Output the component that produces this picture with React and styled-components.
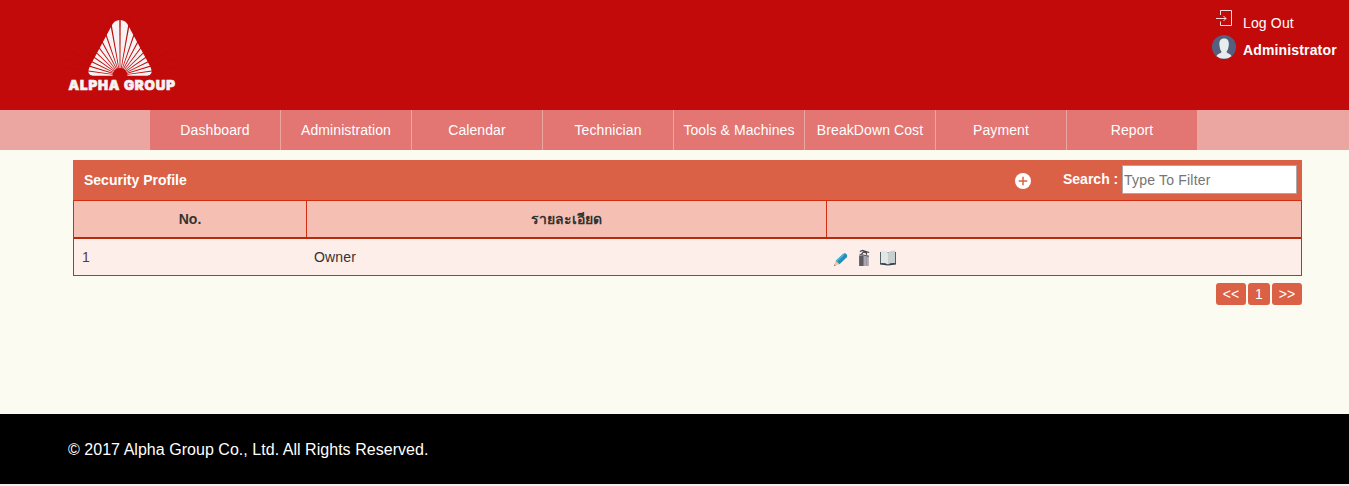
import React from "react";
import styled, { createGlobalStyle } from "styled-components";

const GlobalStyle = createGlobalStyle`
  * { box-sizing: border-box; }
  body { margin: 0; background: #eee; font: 14px/20px "Liberation Sans", Arial, "Noto Sans", sans-serif; color: #333; }
`;

const Page = styled.div`
  height: 484px;
  display: flex;
  flex-direction: column;
  background: #fbfbf2;
`;
const Header = styled.header`
  height: 110px;
  background: #c20a0a;
  display: flex;
  justify-content: space-between;
  padding: 0 10px 0 60px;
`;
const LogoArt = styled.svg`
  width: 124px;
  height: 100px;
  display: block;
`;
const Account = styled.div`
  width: 127px;
  padding-top: 9px;
  color: #fff;
`;
const AccountRow = styled.div`
  height: ${(p) => (p.$bold ? 27 : 26)}px;
  display: grid;
  grid-template-columns: 31px 1fr;
  line-height: ${(p) => (p.$bold ? 30 : 28)}px;
  white-space: nowrap;
  font-weight: ${(p) => (p.$bold ? 700 : 400)};
  letter-spacing: 0.15px;
  svg { display: block; }
`;
const Nav = styled.nav`
  height: 40px;
  flex: none;
  background: #eba6a2;
  padding-left: 150px;
  display: flex;
`;
const NavItem = styled.a`
  width: 131px;
  line-height: 40px;
  text-align: center;
  color: #fff;
  white-space: nowrap;
  letter-spacing: 0.09px;
  background: #e37573;
  border-right: 1px solid #eba6a2;
  &:last-child { width: 130px; border-right: 0; }
`;
const Main = styled.main`
  flex: 1;
  padding: 10px 47px 0 73px;
`;
const PanelBar = styled.div`
  height: 40px;
  display: flex;
  align-items: center;
  background: #da6145;
  color: #fff;
  font-weight: 700;
  padding: 0 5px 0 11px;
`;
const Title = styled.span`
  flex: 1;
`;
const AddIcon = styled.svg`
  width: 16px;
  height: 16px;
  margin: 2px 32px 0 0;
`;
const Label = styled.label`
  width: 59px;
  padding-bottom: 2px;
`;
const Filter = styled.input`
  width: 175px;
  height: 29px;
  margin: -1px 0 0;
  padding: 2px 1px 1px;
  border: 1px solid #a9a9a9;
  border-radius: 0;
  background: #fff;
  font: 14px "Liberation Sans", Arial, sans-serif;
  letter-spacing: 0.2px;
  &::placeholder { color: #757575; }
`;
const Grid = styled.div`
  border: 1px solid #cf2f10;
`;
const Row = styled.div`
  display: grid;
  grid-template-columns: 233px 520px 1fr;
  height: ${(p) => (p.$head ? 38 : 36)}px;
  line-height: 36px;
  background: ${(p) => (p.$head ? "#f5c0b3" : "#feeeea")};
  border-bottom: ${(p) => (p.$head ? "2px solid #b52b0e" : "0")};
`;
const HeadCell = styled.div`
  text-align: center;
  font-weight: 700;
  border-right: 1px solid #cf2f10;
  &:last-child { border-right: 0; }
`;
const Cell = styled.div`
  padding-left: ${(p) => p.$inset || 7}px;
  letter-spacing: 0.15px;
  color: ${(p) => p.$color || "#333"};
`;
const Actions = styled.div`
  padding: 10px 0 0 6px;
  display: flex;
  gap: 7px;
  svg { display: block; }
`;
const Pager = styled.div`
  display: flex;
  justify-content: flex-end;
  gap: 2px;
  padding-top: 7px;
`;
const PageButton = styled.a`
  width: ${(p) => p.$w}px;
  height: 22px;
  line-height: 22px;
  text-align: center;
  border-radius: 3px;
  color: #fff;
  background: #da6145;
`;
const Footer = styled.footer`
  height: 70px;
  background: #000;
  color: #fff;
  font-size: 16px;
  line-height: 71px;
  letter-spacing: 0.035px;
  padding-left: 68px;
`;

const navItems = ["Dashboard", "Administration", "Calendar", "Technician", "Tools & Machines", "BreakDown Cost", "Payment", "Report"];
const rays = [-82, -73, -64, -55, -46, -37, -28, -19, -10, 0, 10, 19, 28, 37, 46, 55, 64, 73, 82];

const Logo = () => (
  <LogoArt viewBox="60 0 124 100">
    <path d="M111.500 26 Q114 20 120 20 Q126 20 128.500 26 L150.500 67 Q154 75 147 75.700 H93 Q86 75 89.500 67 Z" fill="#f5f3f3" />
    {rays.map((a) => (
      <path key={a} d="M119.700 76 L119.250 14 H120.750 L120.300 76 Z" transform={`rotate(${a} 120 75.500)`} fill="#c20a0a" />
    ))}
    <path d="M112.500 76 A7.500 8 0 0 1 127.500 76 Z" fill="#c20a0a" />
    <text x="68.500" y="90.300" textLength="106.500" lengthAdjust="spacing" fontFamily="Inter, Lato, sans-serif" fontWeight="900" fontSize="13.300" fill="#f5f3f3" stroke="#f5f3f3" strokeWidth="0.700">ALPHA GROUP</text>
  </LogoArt>
);

const ExitIcon = () => (
  <svg width="24" height="24" viewBox="0 0 24 24" fill="none" stroke="#fff" strokeOpacity="0.85" strokeWidth="1">
    <path d="M8.500 6V1.500H19.500V16.500H8.500V12.500M4 9.500H14M11.500 7L14 9.500L11.500 12" />
  </svg>
);
const Avatar = () => (
  <svg width="24" height="24" viewBox="0 0 24 24">
    <circle cx="12" cy="12" r="12" fill="#556080" />
    <path d="M4.500 21.200C5.500 18.500 9.500 18.500 9.500 16.500C8.200 15 7.700 12.500 7.400 10C7 5.500 9 3.500 12.200 3.500S17.200 5.500 16.800 10C16.500 12.500 16 15 14.600 16.500C14.600 18.500 18.500 18.500 19.500 21.200A12 12 0 0 1 4.500 21.200Z" fill="#e7eced" />
  </svg>
);
const Pencil = () => (
  <svg width="16" height="18" viewBox="0 0 16 18">
    <path d="M1 16.700L2.800 11.800L6.500 15.200Z" fill="#f0c2a5" />
    <path d="M1 16.900L1.500 15.400L2.600 16.500Z" fill="#455660" />
    <path d="M2.800 11.800L10.300 4.700Q12 3.500 13.400 5T13.800 8.200L6.500 15.200Z" fill="#238fb8" />
    <path d="M2.800 11.800L10.300 4.700L11.500 5.800L4 13Z" fill="#49b4d4" />
  </svg>
);
const Trash = () => (
  <svg width="16" height="18" viewBox="0 0 16 18">
    <path d="M3.200 6.500H12.800V17H3.200Z" fill="#a9a7ad" />
    <path d="M3.200 6.500H7.500V17H3.200Z" fill="#5c5b62" />
    <path d="M10.500 8V16" stroke="#99979f" />
    <path d="M3.500 5.200L13 7.300" fill="none" stroke="#55545b" strokeWidth="1" />
    <path d="M3.800 2.500L6.500 1.500L13.200 3.500M5.500 5L7.500 3L10.500 4V5.800" fill="none" stroke="#45444b" strokeWidth="1.200" />
  </svg>
);
const Book = () => (
  <svg width="18" height="18" viewBox="0 0 18 18">
    <path d="M1 3V15.500L9 16.500L17 15.500V3" fill="#30404d" />
    <path d="M1.800 1.500Q6.500 1.500 9 3.500V15.500Q6 13.800 1.800 14.200Z" fill="#e4e6e4" />
    <path d="M16.200 1.500Q11.500 1.500 9 3.500V15.500Q12 13.800 16.200 14.200Z" fill="#c8d0cf" />
  </svg>
);

export default function App() {
  return (
    <>
      <GlobalStyle />
      <Page>
        <Header>
          <Logo />
          <Account>
            <AccountRow><ExitIcon /><span>Log Out</span></AccountRow>
            <AccountRow $bold><Avatar /><span>Administrator</span></AccountRow>
          </Account>
        </Header>
        <Nav>{navItems.map((n) => <NavItem key={n}>{n}</NavItem>)}</Nav>
        <Main>
          <PanelBar>
            <Title>Security Profile</Title>
            <AddIcon viewBox="0 0 16 16">
              <circle cx="8" cy="8" r="8" fill="#fff" />
              <path d="M8 3.700V12.300M3.700 8H12.300" stroke="#da6145" strokeWidth="1.500" />
            </AddIcon>
            <Label htmlFor="filter">Search :</Label>
            <Filter id="filter" placeholder="Type To Filter" />
          </PanelBar>
          <Grid>
            <Row $head>
              <HeadCell>No.</HeadCell>
              <HeadCell>รายละเอียด</HeadCell>
              <HeadCell />
            </Row>
            <Row>
              <Cell $inset={8} $color="#5a3a32">1</Cell>
              <Cell>Owner</Cell>
              <Actions><Pencil /><Trash /><Book /></Actions>
            </Row>
          </Grid>
          <Pager>
            <PageButton $w={30}>&lt;&lt;</PageButton>
            <PageButton $w={22}>1</PageButton>
            <PageButton $w={30}>&gt;&gt;</PageButton>
          </Pager>
        </Main>
        <Footer>© 2017 Alpha Group Co., Ltd. All Rights Reserved.</Footer>
      </Page>
    </>
  );
}
